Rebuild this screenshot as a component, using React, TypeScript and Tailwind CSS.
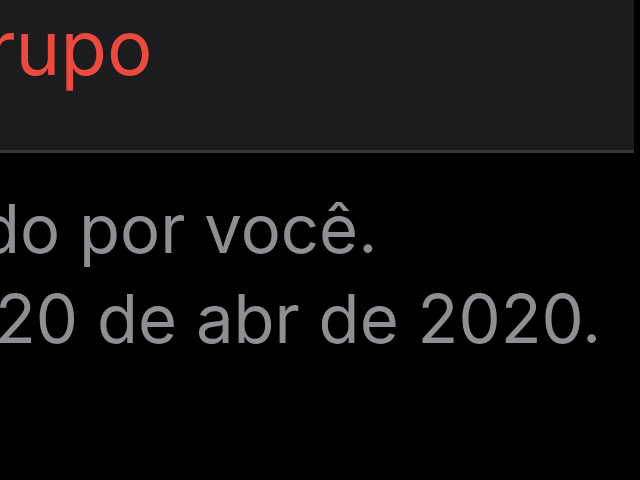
export default function App() {
  return (
    <div className="w-[640px] h-[480px] bg-black overflow-hidden" style={{ fontFamily: 'Inter, "Liberation Sans", sans-serif' }}>
      <div className="w-[634px] h-[153px] bg-[#1c1c1e] border-b-[3px] border-[#38383a] overflow-hidden">
        <p className="whitespace-nowrap text-[76px] leading-none text-[#ec4a3f] -ml-[13px] pt-[9px]">rupo</p>
      </div>
      <div className="overflow-hidden pt-[31px] text-[#8e8e93] text-[67px] leading-[90px] whitespace-nowrap">
        <p className="-ml-[21px]">do por você.</p>
        <p className="-ml-[5px]">20 de abr de 2020.</p>
      </div>
    </div>
  );
}
